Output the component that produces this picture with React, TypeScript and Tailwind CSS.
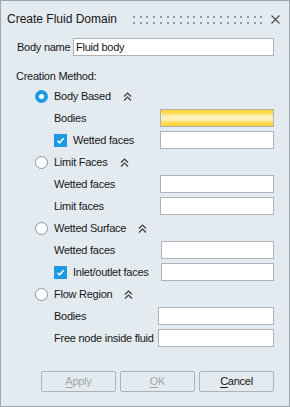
import React from "react";

type Row = { label: string; check?: boolean; yellow?: boolean };
type Group = { title: string; selected?: boolean; w: string; rows: Row[] };

const groups: Group[] = [
  {
    title: "Body Based",
    selected: true,
    w: "w-[114px]",
    rows: [{ label: "Bodies", yellow: true }, { label: "Wetted faces", check: true }],
  },
  {
    title: "Limit Faces",
    w: "w-[114px]",
    rows: [{ label: "Wetted faces" }, { label: "Limit faces" }],
  },
  {
    title: "Wetted Surface",
    w: "w-[113px]",
    rows: [{ label: "Wetted faces" }, { label: "Inlet/outlet faces", check: true }],
  },
  {
    title: "Flow Region",
    w: "w-[116px]",
    rows: [{ label: "Bodies" }, { label: "Free node inside fluid" }],
  },
];

function Radio({ on }: { on?: boolean }) {
  if (on)
    return (
      <span className="flex h-[13px] w-[13px] shrink-0 items-center justify-center rounded-full bg-[#1c9ae2]">
        <span className="h-[5px] w-[5px] rounded-full bg-white" />
      </span>
    );
  return <span className="h-[13px] w-[13px] shrink-0 rounded-full border border-[#8e969e] bg-white" />;
}

function Check() {
  return (
    <span className="flex h-[13px] w-[13px] shrink-0 items-center justify-center bg-[#1c9ae2]">
      <svg width="9" height="9" viewBox="0 0 9 9">
        <path d="M1.5 4.8 L3.6 6.8 L7.6 2.2" fill="none" stroke="white" strokeWidth="1.5" />
      </svg>
    </span>
  );
}

function Chevrons() {
  return (
    <svg width="9" height="9" viewBox="0 0 9 9" className="ml-[12px] shrink-0">
      <path d="M1 4.5 L4.5 1 L8 4.5 M1 8.5 L4.5 5 L8 8.5" fill="none" stroke="#3d3d3d" strokeWidth="1.2" />
    </svg>
  );
}

function Dots() {
  const xs = Array.from({ length: 20 }, (_, i) => 1 + i * 6.7);
  return (
    <svg width="130" height="9" viewBox="0 0 130 9" className="shrink-0">
      {xs.map((x) => (
        <React.Fragment key={x}>
          <rect x={Math.round(x)} y="1" width="2" height="2" fill="#9199a1" />
          <rect x={Math.round(x)} y="7" width="2" height="2" fill="#9199a1" />
        </React.Fragment>
      ))}
    </svg>
  );
}

export default function App() {
  return (
    <div className="flex h-[407px] w-[290px] flex-col border border-[#9ea6ae] bg-[#e4ebf0] font-['Liberation_Sans',Arial,sans-serif] text-[11px] tracking-[-0.25px] text-[#161616]">
      {/* title bar */}
      <div className="mt-[7px] flex h-[22px] items-center pl-[6px] pr-[9px]">
        <span className="text-[12px] tracking-normal">Create Fluid Domain</span>
        <span className="ml-[15px]">
          <Dots />
        </span>
        <svg width="9" height="9" viewBox="0 0 9 9" className="ml-auto">
          <path d="M0.5 0.5 L8.5 8.5 M8.5 0.5 L0.5 8.5" stroke="#4a4a4a" strokeWidth="1.1" />
        </svg>
      </div>

      {/* body name */}
      <div className="mt-[6px] flex h-[22px] items-center pl-[16px] pr-[15px]">
        <span className="flex-1">Body name</span>
        <div className="flex h-[18px] w-[201px] items-center border border-[#adb3b9] bg-white pl-[2px]">
          Fluid body
        </div>
      </div>

      <div className="mt-[9px] flex h-[18px] items-center pl-[15px]">Creation Method:</div>

      {groups.map((g) => (
        <div key={g.title} className="flex flex-col">
          <div className="flex h-[22px] items-center pl-[34px]">
            <Radio on={g.selected} />
            <span className="ml-[6px]">{g.title}</span>
            <Chevrons />
          </div>
          {g.rows.map((r) => (
            <div key={r.label} className="flex h-[22px] items-center pl-[53px] pr-[15px]">
              {r.check && (
                <span className="mr-[6px]">
                  <Check />
                </span>
              )}
              <span className="flex-1 whitespace-nowrap">{r.label}</span>
              <div
                className={`h-[18px] shrink-0 border border-[#adb3b9] ${g.w} ${
                  r.yellow
                    ? "bg-[linear-gradient(to_bottom,#ffd22c_0%,#ffd94e_15%,#fff3c4_45%,#fff3c4_55%,#ffd94e_85%,#ffd22c_100%)]"
                    : "bg-white"
                }`}
              />
            </div>
          ))}
        </div>
      ))}

      {/* buttons */}
      <div className="mt-[22px] flex justify-end gap-[4px] pr-[15px]">
        <button className="flex h-[21px] w-[75px] items-center justify-center rounded-[2px] border border-[#adb3b9] text-[#a2a6aa]">
          <span className="underline underline-offset-2">A</span>pply
        </button>
        <button className="flex h-[21px] w-[75px] items-center justify-center rounded-[2px] border border-[#adb3b9] text-[#a2a6aa]">
          <span className="underline underline-offset-2">O</span>K
        </button>
        <button className="flex h-[21px] w-[75px] items-center justify-center rounded-[2px] border border-[#adb3b9] text-[#161616]">
          <span className="underline underline-offset-2">C</span>ancel
        </button>
      </div>
    </div>
  );
}
